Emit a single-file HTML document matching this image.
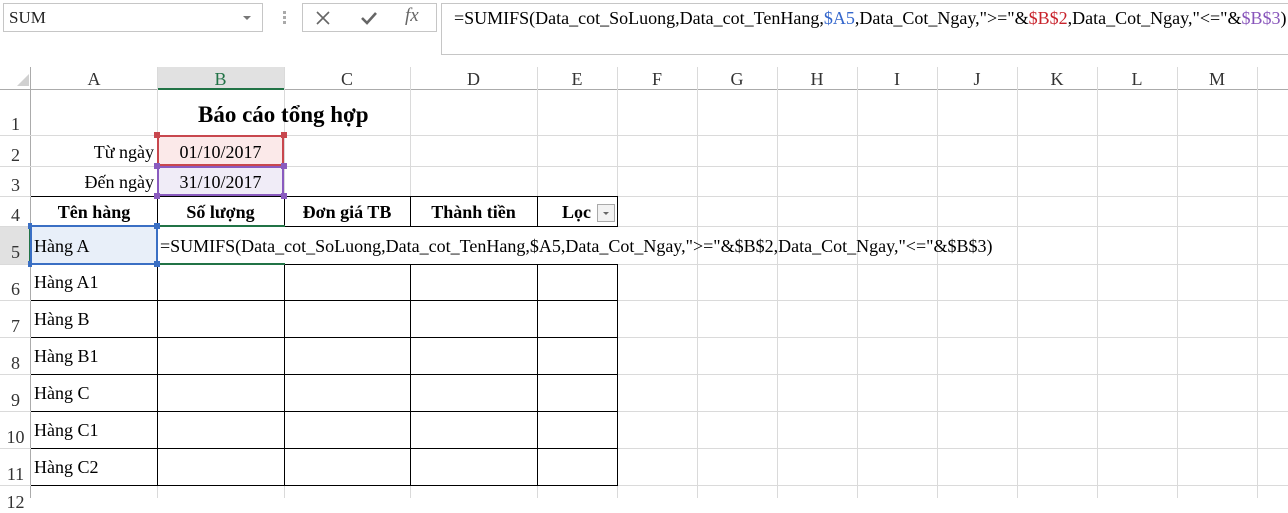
<!DOCTYPE html>
<html><head><meta charset="utf-8"><style>
*{margin:0;padding:0;box-sizing:border-box}
body{width:1288px;height:498px;overflow:hidden;background:#fff;position:relative;font-family:"Liberation Serif",serif;font-size:18px;color:#000}
.a{position:absolute}
.v{position:absolute;width:1px;background:#dadada}
.h{position:absolute;height:1px;background:#dadada}
.bv{position:absolute;width:1px;background:#000}
.bh{position:absolute;height:1px;background:#000}
.ch{position:absolute;top:67px;height:23px;text-align:center;line-height:24px;font-size:18px;color:#333}
.rn{position:absolute;left:0;width:31px;text-align:center;font-size:18px;color:#333}
.t{position:absolute;white-space:nowrap;line-height:20px;font-size:18px}
.b{font-weight:bold}
.hd{width:6px;height:6px;position:absolute}
</style></head><body>
<div class="a" style="left:3px;top:3px;width:260px;height:29px;border:1px solid #c6c6c6;background:#fff"></div>
<div class="t" style="left:9px;top:8px;font-size:17px;color:#222">SUM</div>
<div class="a" style="left:243px;top:16px;width:0;height:0;border-left:4px solid transparent;border-right:4px solid transparent;border-top:4px solid #777"></div>
<div class="a" style="left:283px;top:11px;width:3px;height:3px;background:#aaa;box-shadow:0 5px 0 #aaa,0 10px 0 #aaa"></div>
<div class="a" style="left:302px;top:3px;width:135px;height:29px;border:1px solid #c6c6c6"></div>
<svg class="a" style="left:314px;top:9px" width="18" height="18"><path d="M3 3L15 15M15 3L3 15" stroke="#666" stroke-width="1.6"/></svg>
<svg class="a" style="left:359px;top:9px" width="20" height="18"><path d="M3 9L8 14L17 4" stroke="#666" stroke-width="2.6" fill="none"/></svg>
<div class="t" style="left:405px;top:6px;font-style:italic;color:#666;font-size:19px">fx</div>
<div class="a" style="left:441px;top:3px;width:850px;height:52px;border:1px solid #c6c6c6;background:#fff"></div>
<div class="t" style="left:454px;top:8px">=SUMIFS(Data_cot_SoLuong,Data_cot_TenHang,<span style="color:#3366cc">$A5</span>,Data_Cot_Ngay,"&gt;="&amp;<span style="color:#c8232c">$B$2</span>,Data_Cot_Ngay,"&lt;="&amp;<span style="color:#8855bb">$B$3</span>)</div>

<div class="a" style="left:0;top:67px;width:1288px;height:23px;background:#fff;border-bottom:1px solid #ababab"></div>
<div class="a" style="left:157px;top:67px;width:127px;height:23px;background:#e1e1e1;border-bottom:2px solid #217346"></div>
<div class="a" style="left:0;top:67px;width:31px;height:431px;border-right:1px solid #ababab"></div>
<div class="a" style="left:17px;top:74px;width:0;height:0;border-left:12px solid transparent;border-bottom:12px solid #d0d0d0"></div>
<div class="a" style="left:0;top:226px;width:31px;height:38px;background:#e1e1e1;border-right:2px solid #217346"></div>

<div class="v" style="left:157px;top:67px;height:431px"></div>
<div class="v" style="left:284px;top:67px;height:431px"></div>
<div class="v" style="left:410px;top:67px;height:431px"></div>
<div class="v" style="left:537px;top:67px;height:431px"></div>
<div class="v" style="left:617px;top:67px;height:431px"></div>
<div class="v" style="left:697px;top:67px;height:431px"></div>
<div class="v" style="left:777px;top:67px;height:431px"></div>
<div class="v" style="left:857px;top:67px;height:431px"></div>
<div class="v" style="left:937px;top:67px;height:431px"></div>
<div class="v" style="left:1017px;top:67px;height:431px"></div>
<div class="v" style="left:1097px;top:67px;height:431px"></div>
<div class="v" style="left:1177px;top:67px;height:431px"></div>
<div class="v" style="left:1257px;top:67px;height:431px"></div>
<div class="h" style="left:0;top:135px;width:1288px"></div>
<div class="h" style="left:0;top:166px;width:1288px"></div>
<div class="h" style="left:0;top:196px;width:1288px"></div>
<div class="h" style="left:0;top:226px;width:1288px"></div>
<div class="h" style="left:0;top:264px;width:1288px"></div>
<div class="h" style="left:0;top:300px;width:1288px"></div>
<div class="h" style="left:0;top:337px;width:1288px"></div>
<div class="h" style="left:0;top:374px;width:1288px"></div>
<div class="h" style="left:0;top:411px;width:1288px"></div>
<div class="h" style="left:0;top:448px;width:1288px"></div>
<div class="h" style="left:0;top:485px;width:1288px"></div>

<div class="ch" style="left:31px;width:126px">A</div>
<div class="ch" style="left:157px;width:127px;color:#217346">B</div>
<div class="ch" style="left:284px;width:126px">C</div>
<div class="ch" style="left:410px;width:127px">D</div>
<div class="ch" style="left:537px;width:80px">E</div>
<div class="ch" style="left:617px;width:80px">F</div>
<div class="ch" style="left:697px;width:80px">G</div>
<div class="ch" style="left:777px;width:80px">H</div>
<div class="ch" style="left:857px;width:80px">I</div>
<div class="ch" style="left:937px;width:80px">J</div>
<div class="ch" style="left:1017px;width:80px">K</div>
<div class="ch" style="left:1097px;width:80px">L</div>
<div class="ch" style="left:1177px;width:80px">M</div>
<div class="rn" style="top:114px">1</div>
<div class="rn" style="top:145px">2</div>
<div class="rn" style="top:175px">3</div>
<div class="rn" style="top:205px">4</div>
<div class="rn" style="top:242px">5</div>
<div class="rn" style="top:279px">6</div>
<div class="rn" style="top:316px">7</div>
<div class="rn" style="top:353px">8</div>
<div class="rn" style="top:390px">9</div>
<div class="rn" style="top:427px">10</div>
<div class="rn" style="top:464px">11</div>
<div class="rn" style="top:492px">12</div>

<div class="a" style="left:157px;top:135px;width:127px;height:31px;background:#fbe9e9;border:2px solid #c8474e"></div>
<div class="a" style="left:157px;top:166px;width:127px;height:30px;background:#f0ecf7;border:2px solid #8a5bbf"></div>
<div class="a" style="left:31px;top:226px;width:126px;height:38px;background:#e8eff9"></div>

<div class="bh" style="left:31px;top:196px;width:587px"></div>
<div class="bh" style="left:31px;top:226px;width:587px"></div>
<div class="bh" style="left:31px;top:264px;width:587px"></div>
<div class="bh" style="left:31px;top:300px;width:587px"></div>
<div class="bh" style="left:31px;top:337px;width:587px"></div>
<div class="bh" style="left:31px;top:374px;width:587px"></div>
<div class="bh" style="left:31px;top:411px;width:587px"></div>
<div class="bh" style="left:31px;top:448px;width:587px"></div>
<div class="bh" style="left:31px;top:485px;width:587px"></div>
<div class="bv" style="left:157px;top:196px;height:290px"></div>
<div class="bv" style="left:284px;top:196px;height:290px"></div>
<div class="bv" style="left:410px;top:196px;height:290px"></div>
<div class="bv" style="left:537px;top:196px;height:290px"></div>
<div class="bv" style="left:617px;top:196px;height:290px"></div>
<div class="a" style="left:158px;top:227px;width:470px;height:37px;background:#fff"></div>
<div class="a" style="left:30px;top:225px;width:128px;height:40px;border:2px solid #3a6fc4"></div>
<div class="a" style="left:156px;top:225px;width:129px;height:40px;border:2px solid #217346;border-left:none;border-right:none"></div>
<div class="hd" style="left:154px;top:132px;background:#c8474e"></div>
<div class="hd" style="left:281px;top:132px;background:#c8474e"></div>
<div class="hd" style="left:154px;top:163px;background:#8a5bbf"></div>
<div class="hd" style="left:281px;top:163px;background:#8a5bbf"></div>
<div class="hd" style="left:154px;top:193px;background:#8a5bbf"></div>
<div class="hd" style="left:281px;top:193px;background:#8a5bbf"></div>
<div class="hd" style="left:154px;top:223px;background:#3a6fc4"></div>
<div class="hd" style="left:154px;top:261px;background:#3a6fc4"></div>
<div class="hd" style="left:28px;top:223px;background:#3a6fc4;width:4px"></div>
<div class="hd" style="left:28px;top:261px;background:#3a6fc4;width:4px"></div>

<div class="t b" style="left:198px;top:102px;font-size:23px;line-height:26px">Báo cáo tổng hợp</div>
<div class="t" style="left:31px;top:142px;width:123px;text-align:right">Từ ngày</div>
<div class="t" style="left:157px;top:142px;width:127px;text-align:center">01/10/2017</div>
<div class="t" style="left:31px;top:172px;width:123px;text-align:right">Đến ngày</div>
<div class="t" style="left:157px;top:172px;width:127px;text-align:center">31/10/2017</div>
<div class="t b" style="left:31px;top:202px;width:126px;text-align:center">Tên hàng</div>
<div class="t b" style="left:157px;top:202px;width:127px;text-align:center">Số lượng</div>
<div class="t b" style="left:284px;top:202px;width:126px;text-align:center">Đơn giá TB</div>
<div class="t b" style="left:410px;top:202px;width:127px;text-align:center">Thành tiền</div>
<div class="t b" style="left:562px;top:202px">Lọc</div>
<div class="a" style="left:597px;top:204px;width:18px;height:18px;border:1px solid #aaa;background:#f2f2f2"></div>
<div class="a" style="left:603px;top:212px;width:0;height:0;border-left:3px solid transparent;border-right:3px solid transparent;border-top:3px solid #666"></div>
<div class="t" style="left:34px;top:236px">Hàng A</div>
<div class="t" style="left:160px;top:236px">=SUMIFS(Data_cot_SoLuong,Data_cot_TenHang,$A5,Data_Cot_Ngay,"&gt;="&amp;$B$2,Data_Cot_Ngay,"&lt;="&amp;$B$3)</div>
<div class="t" style="left:34px;top:272px">Hàng A1</div>
<div class="t" style="left:34px;top:309px">Hàng B</div>
<div class="t" style="left:34px;top:346px">Hàng B1</div>
<div class="t" style="left:34px;top:383px">Hàng C</div>
<div class="t" style="left:34px;top:420px">Hàng C1</div>
<div class="t" style="left:34px;top:457px">Hàng C2</div>
</body></html>
